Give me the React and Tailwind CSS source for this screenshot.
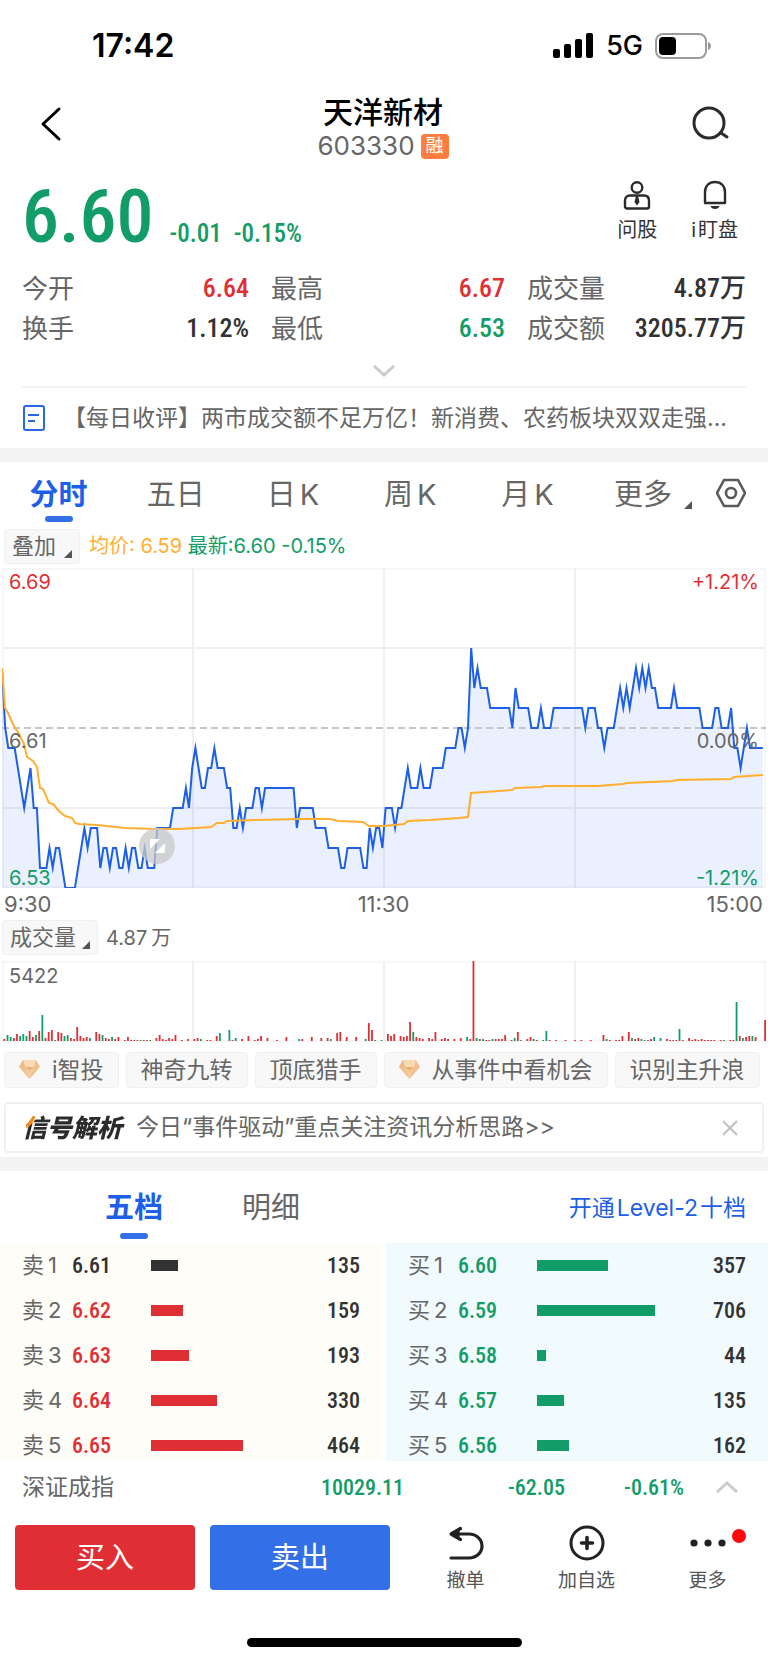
import React, { useState } from "react";
import clsx from "clsx";

const stats = [
  { label: "今开", value: "6.64", color: "text-[#e02f34]" },
  { label: "最高", value: "6.67", color: "text-[#e02f34]" },
  { label: "成交量", value: "4.87万", color: "text-[#323232]" },
  { label: "换手", value: "1.12%", color: "text-[#323232]" },
  { label: "最低", value: "6.53", color: "text-[#129c68]" },
  { label: "成交额", value: "3205.77万", color: "text-[#323232]" },
];

const periods = [
  { key: "fs", cjk: "分时" },
  { key: "5d", cjk: "五日" },
  { key: "day", cjk: "日", latin: "K" },
  { key: "week", cjk: "周", latin: "K" },
  { key: "month", cjk: "月", latin: "K" },
];

const chips = [
  { name: "i智投", vip: true },
  { name: "神奇九转" },
  { name: "顶底猎手" },
  { name: "从事件中看机会", vip: true },
  { name: "识别主升浪" },
];

const asks = [
  { name: "1", price: "6.61", qty: 135, text: "text-[#323232]", bar: "bg-[#323232]" },
  { name: "2", price: "6.62", qty: 159, text: "text-[#e02f34]", bar: "bg-[#e02f34]" },
  { name: "3", price: "6.63", qty: 193, text: "text-[#e02f34]", bar: "bg-[#e02f34]" },
  { name: "4", price: "6.64", qty: 330, text: "text-[#e02f34]", bar: "bg-[#e02f34]" },
  { name: "5", price: "6.65", qty: 464, text: "text-[#e02f34]", bar: "bg-[#e02f34]" },
];

const bids = [
  { name: "1", price: "6.60", qty: 357, text: "text-[#129c68]", bar: "bg-[#129c68]" },
  { name: "2", price: "6.59", qty: 706, text: "text-[#129c68]", bar: "bg-[#129c68]" },
  { name: "3", price: "6.58", qty: 44, text: "text-[#129c68]", bar: "bg-[#129c68]" },
  { name: "4", price: "6.57", qty: 135, text: "text-[#129c68]", bar: "bg-[#129c68]" },
  { name: "5", price: "6.56", qty: 162, text: "text-[#129c68]", bar: "bg-[#129c68]" },
];

// minute:ticks above 6.53, only where the line changes direction
const priceData =
  "0:11 1:8 2:7 4:7 7:4 9:6 10:4 11:4 12:1 14:1 15:2 16:1 17:2 18:2 20:0 23:0 26:3 27:2 28:3 30:3 31:1 32:2 33:2 34:1 35:2 36:2 37:1 38:1 39:2 40:1 41:2 42:2 43:1 44:1 45:2 46:1 48:1 49:3 53:3 54:4 57:4 58:5 59:4 60:6 61:7 63:5 64:5 65:6 66:6 67:7 68:6 70:6 71:5 72:5 73:3 74:3 75:4 76:3 77:4 79:4 80:5 81:5 82:4 83:5 92:5 93:3 94:4 98:4 99:3 102:3 103:2 106:2 107:1 108:1 109:2 113:2 114:1 115:1 116:3 117:2 118:3 119:3 120:2 121:4 123:4 124:3 125:4 126:4 128:6 129:5 131:5 132:6 133:5 135:5 136:6 139:6 140:7 143:7 144:8 145:8 146:7 147:8 148:12 149:10 150:11 151:10 153:10 154:9 160:9 161:8 162:10 163:9 166:9 167:8 169:8 170:9 171:8 173:8 174:9 183:9 184:8 185:9 187:9 188:8 189:8 190:7 191:8 193:8 195:10 196:9 197:10 198:9 200:11 201:10 202:11 203:10 204:11 205:10 206:10 207:9 211:9 212:10 213:9 220:9 221:8 224:8 225:9 226:9 227:8 229:8 230:9 231:7 232:7 233:6 235:8 236:7 240:7";

const avgPoints =
  "0,100 3,140 6,145 9,152 13,160 16,164 22,176 25,189 31,193 35,199 38,220 41,221 47,235 51,236 57,243 63,248 70,250 73,255 77,256 95,257 123,260 155,261 178,261 209,259 215,255 222,255 225,253 253,252 298,251 328,251 336,253 361,254 367,258 381,258 402,256 406,253 428,252 457,250 466,249 469,225 510,222 513,220 539,219 543,218 596,218 621,216 625,215 671,213 675,212 729,211 732,209 761,207";

// minute:height:r|g
const volumeData =
  "0:2r 1:6g 2:4g 3:3r 4:7r 5:5g 6:7g 7:5g 8:10r 9:4r 10:6g 11:10r 12:26g 13:3r 14:9r 15:11r 16:1g 17:9r 18:8r 19:5g 20:6g 21:3r 22:2r 23:14r 24:5r 25:3r 26:4r 27:3g 29:9r 30:7r 31:6g 32:3r 33:2r 34:4g 35:2r 36:4r 38:1r 39:4r 40:1r 41:1r 42:1r 43:1g 44:1r 45:1r 46:1g 48:3r 49:6r 50:2r 51:1r 52:3r 53:2r 54:6r 56:1r 58:2r 60:2r 61:3r 62:2g 64:1r 65:1r 67:5r 68:8g 71:11g 72:1r 73:3g 75:2r 77:5r 79:1r 80:2r 81:5r 83:3r 86:1r 89:4r 93:2g 94:2r 97:4r 100:3r 102:3r 103:2g 105:8r 106:9r 108:4r 111:4r 114:2g 115:18r 116:11r 117:1g 119:1g 121:7r 122:5r 123:7r 125:5r 126:4r 127:5r 128:19r 129:9g 130:4r 131:3r 132:2r 134:3r 135:2r 136:9r 138:2r 139:3r 140:2r 142:2r 144:3r 146:4g 147:2r 148:80r 149:3g 150:2r 151:2g 152:1r 153:1r 154:2g 155:2r 156:2r 157:2r 158:6r 160:1r 161:3g 162:9r 163:1g 165:2r 166:4r 167:2g 168:1r 170:1g 171:10g 172:1r 174:1r 177:1r 180:1r 182:1r 185:1r 189:6r 190:2g 191:1r 193:1r 194:1r 195:5r 197:9r 198:3g 199:2r 200:3r 201:2g 202:1g 203:1r 204:2r 205:4g 207:3g 209:2r 210:1r 211:1r 212:1r 213:12g 214:1r 216:3r 217:1r 218:2r 219:1r 220:2r 221:1r 222:1r 223:1r 224:1r 226:1r 227:1g 229:1r 230:1r 231:39g 232:5r 233:3g 234:4r 235:5r 236:5g 237:4r 240:21r";

const STEP = 3.17;

const pricePoints = priceData
  .split(" ")
  .map((p) => {
    const [minute, tick] = p.split(":").map(Number);
    return `${(minute * STEP).toFixed(1)},${320 - tick * 20}`;
  })
  .join(" ");

const volumes = volumeData.split(" ").map((p) => {
  const [minute, rest] = p.split(":");
  return {
    minute: Number(minute),
    height: parseInt(rest, 10),
    up: rest.endsWith("r"),
  };
});

const num = "font-['Roboto_Condensed',Roboto,'Noto_Sans_CJK_SC',sans-serif] font-medium";

const Corner = () => (
  <svg className="h-2 w-2 self-end" viewBox="0 0 8 8">
    <path d="M8 0v8H0z" fill="#555" />
  </svg>
);

const Diamond = () => (
  <svg className="h-5 w-[21px]" viewBox="0 0 21 20">
    <path d="M4 0h13l4 7-10.500 12L0 7z" fill="#f0c08d" />
    <path d="M4 0h13l-2 7H6z" fill="#f7d9b4" />
    <path d="M6 7h9l-4.500 12z" fill="#f5cea0" />
    <path d="M0 7l4-7 2 7z" fill="#eebb88" />
    <path d="M6 7h9l-4.500 4z" fill="#e9b27c" />
  </svg>
);

const StatusBar = () => (
  <div className="flex h-[92px] items-center justify-between pl-[92px] pr-[55px]">
    <span className="text-[32px] font-semibold text-black">17:42</span>
    <div className="flex items-center gap-3">
      <svg className="h-[26px] w-[41px]" viewBox="0 0 41 26">
        <rect x="0" y="16" width="7" height="9" rx="2" />
        <rect x="11" y="11" width="7" height="14" rx="2" />
        <rect x="22" y="6" width="7" height="19" rx="2" />
        <rect x="33" y="0" width="7" height="25" rx="2" />
      </svg>
      <span className="text-[27px] font-medium text-black">5G</span>
      <svg className="h-[26px] w-[58px]" viewBox="0 0 58 26">
        <rect x="1" y="1" width="50" height="24" rx="7" fill="none" stroke="#9b9b9b" strokeWidth="2" />
        <rect x="4" y="4" width="17" height="18" rx="4" />
        <path d="M53 9c4 1 4 7 0 8z" fill="#9b9b9b" />
      </svg>
    </div>
  </div>
);

const Header = () => (
  <header className="flex h-[72px] items-center justify-between pl-10 pr-[38px]">
    <button aria-label="返回" className="w-[34px] pb-2">
      <svg className="h-9 w-[22px]" viewBox="0 0 22 36" fill="none" stroke="#000" strokeWidth="3" strokeLinecap="round" strokeLinejoin="round">
        <path d="M19 3L3 18l16 15" />
      </svg>
    </button>
    <div className="flex flex-col items-center">
      <h1 className="text-[30px] font-medium leading-9 text-black">天洋新材</h1>
      <div className="flex items-center gap-[6px]">
        <span className="text-[26px] leading-8 text-[#666]">603330</span>
        <span className="flex h-[25px] w-7 items-center justify-center rounded bg-[#ff7d3e] text-[18px] leading-none text-white">
          融
        </span>
      </div>
    </div>
    <button aria-label="搜索" className="pb-2">
      <svg className="h-[38px] w-[38px]" viewBox="0 0 38 38" fill="none" stroke="#2b2b2b" strokeWidth="3" strokeLinecap="round">
        <circle cx="17" cy="18" r="15" />
        <path d="M29 28l6 4" />
      </svg>
    </button>
  </header>
);

const Quote = () => (
  <section className="px-[22px]">
    <div className="flex h-[88px] items-end justify-between">
      <div className={clsx("flex items-baseline text-[#129c68]", num)}>
        <span className="text-[74px] leading-[68px]">6.60</span>
        <span className="ml-4 text-[25px]">-0.01</span>
        <span className="ml-3 text-[25px]">-0.15%</span>
      </div>
      <div className="flex gap-[34px] pb-[10px] pr-2 text-[20px] leading-6 text-[#323232]">
        <button className="flex flex-col items-center gap-2">
          <svg className="h-[30px] w-[30px]" viewBox="0 0 30 30" fill="none" stroke="#2b2b2b" strokeWidth="2.4">
            <circle cx="15" cy="7.500" r="5.300" />
            <path d="M8 15.500h14c3 0 5 2 5 5v6c0 1-1 2-2 2H5c-1 0-2-1-2-2v-6c0-3 2-5 5-5z" />
            <path d="M14 16h2l1.500 6-2.500 3.500-2.500-3.500z" fill="#2b2b2b" stroke="none" />
          </svg>
          问股
        </button>
        <button className="flex flex-col items-center gap-2">
          <svg className="h-[30px] w-[30px]" viewBox="0 0 30 30" fill="none" stroke="#2b2b2b" strokeWidth="2.4">
            <path d="M5 23V12c0-6 4-10 10-10s10 4 10 10v11z" strokeLinejoin="round" />
            <path d="M10.500 26h9c-1 4-8 4-9 0z" fill="#2b2b2b" stroke="none" />
          </svg>
          <span className="flex gap-[2px]">
            i<span>盯盘</span>
          </span>
        </button>
      </div>
    </div>
    <dl className="mt-4 grid grid-cols-[227fr_234fr_219fr] gap-x-[22px]">
      {stats.map((item) => (
        <div key={item.label} className="flex h-10 items-center justify-between whitespace-nowrap">
          <dt className="text-[26px] text-[#666]">{item.label}</dt>
          <dd className={clsx("text-[26px]", num, item.color)}>{item.value}</dd>
        </div>
      ))}
    </dl>
    <button aria-label="展开" className="flex h-10 w-full items-center justify-center border-b-2 border-[#f2f2f2] pt-2">
      <svg className="h-3 w-[22px]" viewBox="0 0 22 12" fill="none" stroke="#ccc" strokeWidth="3">
        <path d="M1 1l10 9 10-9" />
      </svg>
    </button>
    <a href="#news" className="flex h-[60px] items-center">
      <svg className="ml-px h-[26px] w-[22px] shrink-0" viewBox="0 0 22 26" fill="none" stroke="#2a66e8" strokeWidth="2">
        <rect x="1" y="1" width="20" height="24" rx="2" />
        <path d="M5 10h11M5 16h7" />
      </svg>
      <span className="ml-[18px] truncate text-[23px] text-[#666]">
        【每日收评】两市成交额不足万亿！新消费、农药板块双双走强...
      </span>
    </a>
  </section>
);

const PeriodTabs = () => {
  const [active, setActive] = useState("fs");
  return (
    <nav className="flex h-[65px] items-start pr-[22px] text-[29px] text-[#666]">
      {periods.map((p) => (
        <button
          key={p.key}
          onClick={() => setActive(p.key)}
          className={clsx(
            "flex flex-1 flex-col items-center pt-3",
            active === p.key && "font-bold text-[#1d5fe6]"
          )}
        >
          <span className="flex gap-1 leading-[42px]">
            {p.cjk}
            {p.latin && <span>{p.latin}</span>}
          </span>
          {active === p.key && (
            <span className="h-[6px] w-7 rounded-full bg-[#3370e8]" />
          )}
        </button>
      ))}
      <button className="ml-7 flex items-center gap-3 pt-3">
        <span className="leading-[42px]">更多</span>
        <span className="flex h-7">
          <Corner />
        </span>
      </button>
      <button aria-label="设置" className="ml-6 pt-[15px]">
        <svg className="h-8 w-[30px]" viewBox="0 0 30 32" fill="none" stroke="#5a5a5a" strokeWidth="2.6" strokeLinejoin="round">
          <path d="M8 3h14l7 13-7 13H8L1 16z" />
          <circle cx="15" cy="16" r="5" />
        </svg>
      </button>
    </nav>
  );
};

const PriceChart = () => (
  <div className="relative mx-[2px] h-80 text-[20px] leading-6">
    <svg className="h-full w-full" viewBox="0 0 764 320" preserveAspectRatio="none">
      <g stroke="#efefef" strokeWidth="2" fill="none">
        <path d="M1 0v320M763 0v320M0 1h764M0 319h764" strokeWidth="1" />
        <path d="M191 0v320M382 0v320M573 0v320M0 80h764M0 240h764" />
      </g>
      <polygon points={`0,320 ${pricePoints} 761,320`} fill="#2f6be8" fillOpacity="0.1" />
      <path d="M0 160h764" stroke="#c6c6c6" strokeWidth="2" strokeDasharray="7 4" />
      <polyline points={pricePoints} fill="none" stroke="#1d5fe6" strokeWidth="2" strokeMiterlimit="8" />
      <polyline points={avgPoints} fill="none" stroke="#ffae30" strokeWidth="2" />
    </svg>
    <span className="absolute left-[7px] top-[2px] text-[#e02f34]">6.69</span>
    <span className="absolute right-[7px] top-[2px] text-[#e02f34]">+1.21%</span>
    <span className="absolute left-[7px] top-[161px] text-[#666]">6.61</span>
    <span className="absolute right-[7px] top-[161px] text-[#666]">0.00%</span>
    <span className="absolute bottom-[-2px] left-[7px] text-[#129c68]">6.53</span>
    <span className="absolute bottom-[-2px] right-[7px] text-[#129c68]">-1.21%</span>
    <button aria-label="全屏" className="absolute bottom-6 left-[137px] h-9 w-9 rounded-full bg-[#c8c8c8]/75">
      <svg className="h-9 w-9" viewBox="0 0 36 36" fill="#fff">
        <path d="M12 11h9l-10 10v-9zM25 25h-9l10-10v9z" />
      </svg>
    </button>
  </div>
);

const VolumeChart = () => (
  <div className="relative mx-[2px] mt-[6px] h-[81px]">
    <svg className="h-full w-full" viewBox="0 0 764 81" preserveAspectRatio="none">
      <g stroke="#efefef" fill="none">
        <path d="M1 0v81M763 0v81M0 1h764M0 80h764" />
        <path d="M191 0v81M382 0v81M573 0v81" strokeWidth="2" />
      </g>
      {volumes.map((v) => (
        <rect
          key={v.minute}
          x={1.4 + v.minute * STEP}
          y={80 - v.height}
          width="1.800"
          height={v.height}
          fill={v.up ? "#e02f34" : "#129c68"}
        />
      ))}
    </svg>
    <span className="absolute left-[7px] top-[3px] text-[20px] leading-6 text-[#666]">5422</span>
  </div>
);

const OrderSide = ({ side, rows, className }) => (
  <ul className={clsx("flex flex-1 flex-col gap-[17px] px-[22px] pb-[2px] pt-2", className)}>
    {rows.map((row) => (
      <li key={row.name} className="flex h-7 items-center">
        <span className="flex w-[50px] gap-1 text-[22px] text-[#666]">
          {side}
          <span>{row.name}</span>
        </span>
        <span className={clsx("w-[79px] text-[22px]", num, row.text)}>{row.price}</span>
        <span
          className={clsx("h-[11px]", row.bar)}
          style={{ width: Math.min(Math.round(row.qty * 0.199), 118) }}
        />
        <span className={clsx("ml-auto text-[22px] text-[#323232]", num)}>{row.qty}</span>
      </li>
    ))}
  </ul>
);

const OrderBook = () => {
  const [tab, setTab] = useState("五档");
  return (
    <section>
      <div className="flex h-[72px] items-start justify-between pl-[105px] pr-[22px] pt-4">
        <div className="flex gap-[79px] text-[29px] text-[#666]">
          {["五档", "明细"].map((name) => (
            <button
              key={name}
              onClick={() => setTab(name)}
              className={clsx(
                "flex flex-col items-center gap-1 leading-[42px]",
                tab === name && "font-bold text-[#1d5fe6]"
              )}
            >
              {name}
              {tab === name && <span className="h-[6px] w-7 rounded-full bg-[#3370e8]" />}
            </button>
          ))}
        </div>
        <a href="#level2" className="flex gap-[2px] text-[23px] leading-[42px] text-[#1d5fe6]">
          开通<span>Level-2</span><span>十档</span>
        </a>
      </div>
      <div className="flex gap-1">
        <OrderSide side="卖" rows={asks} className="bg-[#fffdf7]" />
        <OrderSide side="买" rows={bids} className="bg-[#f1fafd]" />
      </div>
    </section>
  );
};

const BottomBar = () => (
  <footer>
    <div className="flex h-[52px] items-center pl-[22px] pr-[30px]">
      <span className="text-[23px] text-[#666]">深证成指</span>
      <div className={clsx("flex flex-1 justify-end text-right text-[22px] text-[#129c68]", num)}>
        <span>10029.11</span>
        <span className="w-[161px]">-62.05</span>
        <span className="w-[119px]">-0.61%</span>
      </div>
      <button aria-label="展开指数" className="ml-8">
        <svg className="h-3 w-[22px]" viewBox="0 0 22 12" fill="none" stroke="#ccc" strokeWidth="3">
          <path d="M1 11l10-9 10 9" />
        </svg>
      </button>
    </div>
    <div className="flex h-[125px] items-start pl-[15px] pt-3">
      <button className="h-[65px] w-[180px] rounded bg-[#e02f34] text-[29px] text-white">买入</button>
      <button className="ml-[15px] h-[65px] w-[180px] rounded bg-[#3370e8] text-[29px] text-white">卖出</button>
      <div className="ml-[15px] grid flex-1 grid-cols-3 text-[19px] leading-6 text-[#555]">
        <button className="flex flex-col items-center gap-2">
          <svg className="h-9 w-9" viewBox="0 0 36 36" fill="none" stroke="#222" strokeWidth="3.200" strokeLinecap="round" strokeLinejoin="round">
            <path d="M12.500 3.500L3 9l9.500 5.500M3 9h18c7.500 0 13 5.500 13 12s-5.500 12-13 12H3" />
            <path d="M4 9l6-3v6z" fill="#222" />
          </svg>
          撤单
        </button>
        <button className="flex flex-col items-center gap-2">
          <svg className="h-9 w-9" viewBox="0 0 36 36" fill="none" stroke="#222" strokeWidth="3" strokeLinecap="round">
            <circle cx="18" cy="18" r="16" />
            <path d="M18 12.500v11M12.500 18h11" strokeWidth="3.600" />
          </svg>
          加自选
        </button>
        <button className="flex flex-col items-center gap-2">
          <span className="relative">
            <svg className="h-9 w-9" viewBox="0 0 36 36" fill="#222">
              <circle cx="4" cy="18" r="3.600" />
              <circle cx="18" cy="18" r="3.600" />
              <circle cx="32" cy="18" r="3.600" />
            </svg>
            <span className="absolute -right-5 top-1 h-[14px] w-[14px] rounded-full bg-[#ff0a0a]" />
          </span>
          更多
        </button>
      </div>
    </div>
    <div className="mx-auto h-[9px] w-[275px] rounded-full bg-black" />
  </footer>
);

const App = () => {
  const [showTip, setShowTip] = useState(true);

  return (
    <div className="min-h-screen bg-white pb-[15px] font-[Inter,'Noto_Sans_CJK_SC',sans-serif]">
      <StatusBar />
      <Header />
      <Quote />
      <div className="h-[14px] bg-[#f4f4f4]" />
      <PeriodTabs />
      <div className="flex h-[41px] items-start pl-1 pt-[2px]">
        <button className="flex h-[35px] items-center rounded border border-[#f0f0f0] bg-[#f8f8f8] px-[7px] text-[22px] text-[#666]">
          叠加
          <span className="ml-2 flex h-[22px]">
            <Corner />
          </span>
        </button>
        <p className="ml-[9px] text-[20px] leading-[35px] text-[#129c68]">
          <span className="text-[#ffae30]">均价: 6.59</span> 最新:6.60 -0.15%
        </p>
      </div>
      <PriceChart />
      <div className="grid h-8 grid-cols-3 items-center pl-1 pr-[5px] text-[22px] text-[#666]">
        <span>9:30</span>
        <span className="text-center">11:30</span>
        <span className="text-right">15:00</span>
      </div>
      <div className="flex items-center pl-[2px]">
        <button className="flex h-[35px] items-center rounded border border-[#f0f0f0] bg-[#f8f8f8] px-[7px] text-[22px] text-[#666]">
          成交量
          <span className="ml-[6px] flex h-[22px]">
            <Corner />
          </span>
        </button>
        <span className="ml-2 flex gap-1 text-[20px] text-[#666]">
          4.87<span>万</span>
        </span>
      </div>
      <VolumeChart />
      <div className="mt-[10px] flex gap-[7px] overflow-hidden pl-1">
        {chips.map((chip) => (
          <button
            key={chip.name}
            className="flex h-9 shrink-0 items-center gap-3 rounded border border-[#f0f0f0] bg-[#f8f8f8] px-[14px] text-[23px] text-[#666]"
          >
            {chip.vip && <Diamond />}
            {chip.name}
          </button>
        ))}
      </div>
      {showTip && (
        <div className="mx-1 mt-[14px] flex h-[51px] items-center rounded border-2 border-[#f0f0f0] pl-4 pr-6">
          <span className="bg-[linear-gradient(135deg,#f08a24_14px,#2b2b2b_14px)] bg-clip-text pr-1 text-[25px] font-black italic leading-7 text-transparent">
            信号解析
          </span>
          <a href="#signal" className="ml-[10px] text-[23px] text-[#666]">
            今日“事件驱动”重点关注资讯分析思路&gt;&gt;
          </a>
          <button aria-label="关闭" className="ml-auto" onClick={() => setShowTip(false)}>
            <svg className="h-4 w-4" viewBox="0 0 16 16" stroke="#c4c4c4" strokeWidth="2.400">
              <path d="M1 1l14 14M15 1L1 15" />
            </svg>
          </button>
        </div>
      )}
      <div className="mt-1 h-[14px] bg-[#f4f4f4]" />
      <OrderBook />
      <BottomBar />
    </div>
  );
};

export default App;
